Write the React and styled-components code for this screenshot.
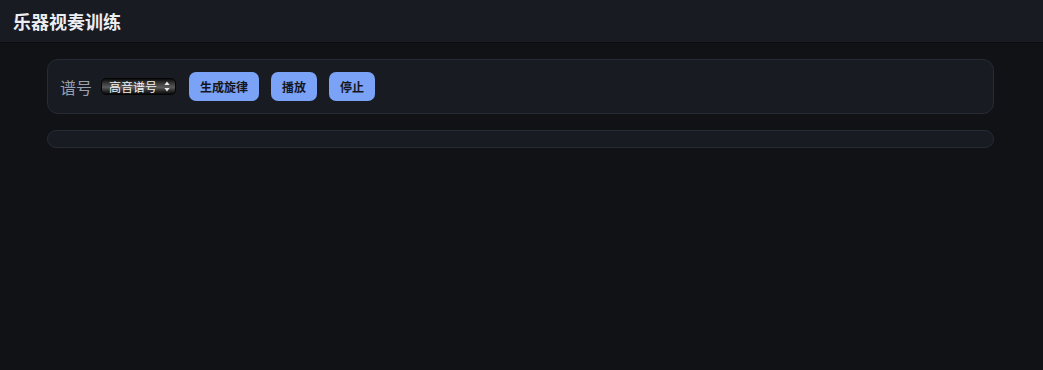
import React, { useState } from 'react';
import styled, { createGlobalStyle } from 'styled-components';

const GlobalStyle = createGlobalStyle`
  html, body {
    margin: 0;
    padding: 0;
    background: #111216;
    color: #e6e8ee;
    font-family: "Noto Sans CJK SC", "Noto Sans", "Liberation Sans", sans-serif;
  }
`;

const Page = styled.div`
  min-height: 370px;
  background: #111216;
`;

const Header = styled.header`
  height: 42px;
  display: flex;
  align-items: center;
  padding: 0 13px;
  background: #181b22;
  border-bottom: 1px solid #0b0c0f;
`;

const Title = styled.h1`
  margin: 0;
  font-size: 18px;
  font-weight: 700;
  color: #eceef2;
  line-height: 22px;
`;

const Main = styled.main`
  margin: 16px 49px 0 47px;
  display: flex;
  flex-direction: column;
  gap: 16px;
`;

const Panel = styled.section`
  background: #181b22;
  border: 1px solid #262b35;
  border-radius: 11px;
  padding: ${p => (p.$empty ? '8px 12px' : '12px')};
`;

const Toolbar = styled.div`
  display: flex;
  align-items: center;
  height: 29px;
`;

const Label = styled.span`
  font-size: 16px;
  color: #9aa0ab;
  margin-right: 9px;
`;

const SelectWrap = styled.div`
  position: relative;
  display: flex;
  margin-right: 13px;
`;

const Select = styled.select`
  display: block;
  appearance: none;
  box-sizing: border-box;
  width: 75px;
  height: 17px;
  padding: 0 16px 0 7px;
  border: 1px solid #050505;
  border-radius: 5px;
  font-family: inherit;
  font-size: 12px;
  font-weight: 400;
  line-height: 15px;
  color: #f2f2f2;
  background: linear-gradient(#0d0d0d 0%, #3a3a3a 30%, #5a5a5a 55%, #2a2a2a 80%, #0a0a0a 100%);
  outline: none;
`;

const Arrows = styled.span`
  position: absolute;
  right: 6px;
  top: 3px;
  display: flex;
  pointer-events: none;
`;

const ButtonRow = styled.div`
  display: flex;
  gap: 12px;
`;

const Button = styled.button`
  height: 29px;
  padding: 0 11px;
  border: none;
  border-radius: 7px;
  background: #7aa2f7;
  color: #14161c;
  font-family: inherit;
  font-size: 12px;
  font-weight: 700;
  cursor: pointer;
`;

export default function App() {
  const [clef, setClef] = useState('treble');

  return (
    <Page>
      <GlobalStyle />
      <Header>
        <Title>乐器视奏训练</Title>
      </Header>
      <Main>
        <Panel>
          <Toolbar>
            <Label>谱号</Label>
            <SelectWrap>
              <Select value={clef} onChange={e => setClef(e.target.value)}>
                <option value="treble">高音谱号</option>
                <option value="bass">低音谱号</option>
              </Select>
              <Arrows>
                <svg width="6" height="11" viewBox="0 0 6 11">
                  <path d="M3 0.5 L5.6 4 H0.4 Z" fill="#e8e8e8" />
                  <path d="M3 10.5 L5.6 7 H0.4 Z" fill="#e8e8e8" />
                </svg>
              </Arrows>
            </SelectWrap>
            <ButtonRow>
              <Button>生成旋律</Button>
              <Button>播放</Button>
              <Button>停止</Button>
            </ButtonRow>
          </Toolbar>
        </Panel>
        <Panel $empty />
      </Main>
    </Page>
  );
}
